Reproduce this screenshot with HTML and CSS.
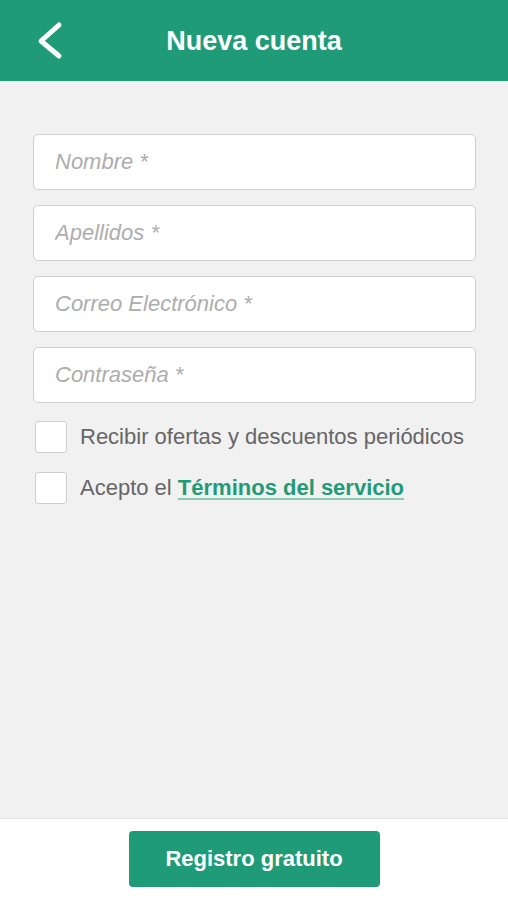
FILE: index.html
```html
<!DOCTYPE html>
<html lang="es">
<head>
<meta charset="utf-8">
<title>Nueva cuenta</title>
<link rel="stylesheet" href="styles.css">
</head>
<body>
<div class="app">
  <header class="topbar">
    <button class="back" aria-label="Atrás">
      <svg width="30" height="42" viewBox="0 0 30 42"><path d="M24 5 L6 21 L24 36" fill="none" stroke="#fff" stroke-width="5" stroke-linecap="round" stroke-linejoin="round"/></svg>
    </button>
    <h1 class="title">Nueva cuenta</h1>
  </header>
  <main class="form">
    <input class="field" type="text" placeholder="Nombre *">
    <input class="field" type="text" placeholder="Apellidos *">
    <input class="field" type="email" placeholder="Correo Electrónico *">
    <input class="field" type="password" placeholder="Contraseña *">
    <label class="check-row"><span class="box"></span><span class="label">Recibir ofertas y descuentos periódicos</span></label>
    <label class="check-row"><span class="box"></span><span class="label">Acepto el <a class="link" href="#">Términos del servicio</a></span></label>
  </main>
  <footer class="footer">
    <button class="submit">Registro gratuito</button>
  </footer>
</div>
</body>
</html>
```
FILE: styles.css
```css
* { box-sizing: border-box; }
html, body { margin: 0; padding: 0; }
body {
  font-family: "Liberation Sans", Arial, sans-serif;
  background: #f1f1f1;
}
.app {
  display: flex;
  flex-direction: column;
  height: 900px;
}
.topbar {
  height: 81px;
  background: #1f9b77;
  display: flex;
  align-items: center;
  justify-content: center;
  position: relative;
}
.back {
  position: absolute;
  left: 35px;
  top: 20px;
  background: none;
  border: 0;
  padding: 0;
  width: 30px;
  height: 42px;
}
.back svg { display: block; }
.title {
  margin: 0;
  color: #fff;
  font-size: 27px;
  font-weight: bold;
  padding-top: 1px;
}
.form {
  flex: 1;
  display: flex;
  flex-direction: column;
  padding: 53px 32px 0 33px;
}
.field {
  height: 56px;
  margin-bottom: 15px;
  border: 1px solid #cfcfcf;
  border-radius: 5px;
  background: #fff;
  padding: 0 21px;
  font-family: "Liberation Sans", Arial, sans-serif;
  font-size: 22px;
  color: #555;
}
.field::placeholder {
  color: #adadad;
  font-style: italic;
}
.field:nth-of-type(4) { margin-bottom: 18px; }
.check-row {
  display: flex;
  align-items: center;
  height: 32px;
  margin-bottom: 19px;
  padding-left: 2px;
}
.box {
  width: 32px;
  height: 32px;
  border: 1px solid #cfcfcf;
  border-radius: 3px;
  background: #fff;
  flex: none;
}
.label {
  margin-left: 13px;
  font-size: 22px;
  color: #666;
  white-space: nowrap;
}
.link {
  color: #1f9b77;
  font-weight: bold;
  text-decoration: underline;
  text-decoration-color: #8cc9b6;
  text-underline-offset: 3px;
}
.footer {
  height: 82px;
  background: #fff;
  border-top: 1px solid #e2e2e2;
  display: flex;
  justify-content: center;
  padding-top: 12px;
}
.submit {
  width: 251px;
  height: 56px;
  background: #1f9b77;
  border: 0;
  border-radius: 4px;
  color: #fff;
  font-family: "Liberation Sans", Arial, sans-serif;
  font-size: 22px;
  font-weight: bold;
}
```
